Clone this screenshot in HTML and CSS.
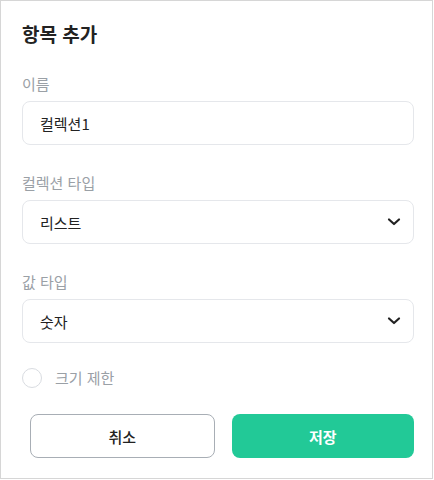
FILE: index.html
```html
<!DOCTYPE html>
<html lang="ko">
<head>
<meta charset="utf-8">
<link rel="stylesheet" href="styles.css">
</head>
<body>
<div class="dialog">
  <h2 class="title">항목 추가</h2>
  <div class="field">
    <div class="label">이름</div>
    <div class="input">컬렉션1</div>
  </div>
  <div class="field">
    <div class="label">컬렉션 타입</div>
    <div class="input select">
      <span>리스트</span>
      <svg class="chev" width="14" height="10" viewBox="0 0 14 10"><path d="M2 2.5 L7 7 L12 2.5" fill="none" stroke="#222" stroke-width="2.2" stroke-linecap="round" stroke-linejoin="round"/></svg>
    </div>
  </div>
  <div class="field">
    <div class="label">값 타입</div>
    <div class="input select">
      <span>숫자</span>
      <svg class="chev" width="14" height="10" viewBox="0 0 14 10"><path d="M2 2.5 L7 7 L12 2.5" fill="none" stroke="#222" stroke-width="2.2" stroke-linecap="round" stroke-linejoin="round"/></svg>
    </div>
  </div>
  <div class="check">
    <span class="box"></span>
    <span class="check-label">크기 제한</span>
  </div>
  <div class="actions">
    <button class="btn cancel">취소</button>
    <button class="btn save">저장</button>
  </div>
</div>
</body>
</html>
```
FILE: styles.css
```css
* { box-sizing: border-box; }
html, body { margin: 0; padding: 0; background: #fff; }
body { font-family: "Noto Sans CJK KR", "Noto Sans", sans-serif; }
.dialog {
  width: 433px;
  height: 479px;
  border: 1px solid #d6d6d6;
  padding: 0 18px 0 21px;
  display: flex;
  flex-direction: column;
}
.title {
  margin: 19px 0 0 0;
  font-size: 19px;
  line-height: 28px;
  font-weight: 700;
  color: #222;
}
.field { margin-top: 26px; display: flex; flex-direction: column; gap: 7px; }
.field + .field { margin-top: 28px; }
.label { font-size: 15px; line-height: 20px; color: #9aa0a6; }
.input {
  height: 44px;
  border: 1px solid #e5e7eb;
  border-radius: 8px;
  padding: 0 12px 0 17px;
  display: flex;
  align-items: center;
  font-size: 15px;
  color: #222;
}
.select { justify-content: space-between; }
.chev { display: block; }
.check { margin-top: 24px; display: flex; align-items: center; gap: 13px; }
.box { width: 20px; height: 20px; border: 1px solid #d9dce1; border-radius: 50%; }
.check-label { font-size: 15px; color: #9aa0a6; }
.actions { margin-top: 26px; padding-left: 8px; display: flex; gap: 17px; }
.btn {
  flex: 1;
  height: 44px;
  border-radius: 8px;
  font-family: inherit;
  font-size: 15px;
}
.cancel { background: #fff; border: 1px solid #a8aeb5; color: #222; font-weight: 500; }
.save { background: #22c997; border: none; color: #fff; font-weight: 700; }
```
